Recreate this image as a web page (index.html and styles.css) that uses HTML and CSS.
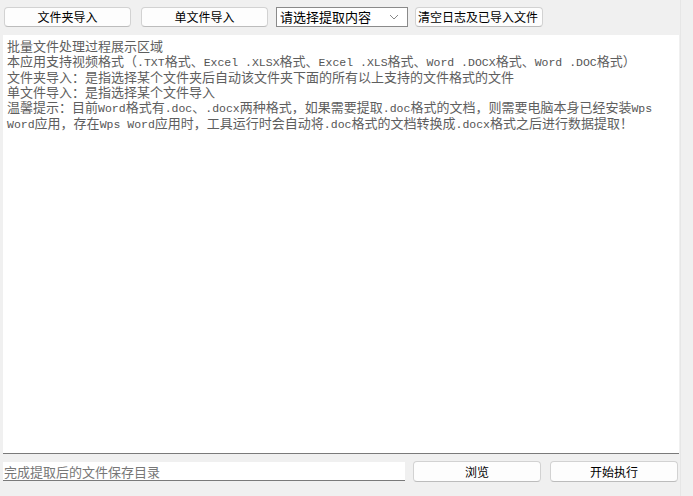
FILE: index.html
```html
<!DOCTYPE html>
<html>
	<head>
		<meta charset="utf-8">
		<title>批量文件处理</title>
		<link rel="stylesheet" href="styles.css">
	</head>
	<body>
		<div id="wrap">
			<div class="toolbar">
				<button type="button" class="btn btn-dir">文件夹导入</button>
				<button type="button" class="btn btn-file">单文件导入</button>
				<div class="select">
					<span>请选择提取内容</span>
					<svg class="arrow" width="10" height="6" viewBox="0 0 10 6"><path d="M1 1 L5 5 L9 1" fill="none" stroke="#888" stroke-width="1"/></svg>
				</div>
				<button type="button" class="btn btn-clear">清空日志及已导入文件</button>
			</div>
			<div class="log">
				<p>批量文件处理过程展示区域</p>
				<p>本应用支持视频格式（<span class="en">.TXT</span>格式、<span class="en">Excel .XLSX</span>格式、<span class="en">Excel .XLS</span>格式、<span class="en">Word .DOCX</span>格式、<span class="en">Word .DOC</span>格式）</p>
				<p>文件夹导入：是指选择某个文件夹后自动该文件夹下面的所有以上支持的文件格式的文件</p>
				<p>单文件导入：是指选择某个文件导入</p>
				<p>温馨提示：目前<span class="en">Word</span>格式有<span class="en">.doc</span>、<span class="en">.docx</span>两种格式，如果需要提取<span class="en">.doc</span>格式的文档，则需要电脑本身已经安装<span class="en">Wps</span></p>
				<p><span class="en">Word</span>应用，存在<span class="en">Wps Word</span>应用时，工具运行时会自动将<span class="en">.doc</span>格式的文档转换成<span class="en">.docx</span>格式之后进行数据提取！</p>
			</div>
			<div class="footer">
				<input type="text" class="path" placeholder="完成提取后的文件保存目录">
				<button type="button" class="btn btn-browse">浏览</button>
				<button type="button" class="btn btn-run">开始执行</button>
			</div>
		</div>
	</body>
</html>
```

FILE: styles.css
```css
body{
	margin: 0;
	background-color: #f0f0f0;
	font-family: "Noto Sans CJK SC", "Noto Sans", sans-serif;
	font-size: 13px;
	color: #000;
}
#wrap {
	width: 680px;
	height: 496px;
	border-right: 1px solid #e6e6e6;
}
.toolbar {
	display: flex;
	align-items: center;
	height: 20px;
	padding: 7px 0 0 4px;
}
.btn {
	height: 20px;
	padding: 0;
	background-color: #fdfdfd;
	border: 1px solid #d2d2d2;
	border-bottom-color: #bcbcbc;
	border-radius: 4px;
	font-family: "Noto Sans CJK SC", sans-serif;
	font-size: 12px;
	line-height: 18px;
	color: #000;
	white-space: nowrap;
	outline: none;
}
.btn-dir {
	width: 127px;
	margin-right: 10px;
}
.btn-file {
	width: 127px;
	margin-right: 8px;
}
.btn-clear {
	width: 128px;
	padding-left: 2px;
	text-align: left;
}
.select {
	width: 127px;
	height: 18px;
	margin-right: 7px;
	padding-left: 3px;
	border: 1px solid #8a8a8a;
	background-color: #fff;
	display: flex;
	align-items: center;
	justify-content: space-between;
	line-height: 18px;
}
.arrow {
	margin-right: 8px;
}
.log {
	margin: 8px 0 0 3px;
	width: 672px;
	height: 415px;
	padding: 3px 0 0 4px;
	background-color: #fff;
	border-bottom: 1px solid #7a7a7a;
	color: #5e5e5e;
	line-height: 15.2px;
}
.log p {
	margin: 0;
	white-space: nowrap;
}
.en {
	font-family: "Liberation Mono", monospace;
	font-size: 11.5px;
	line-height: 1;
	color: #555;
}
.footer {
	display: flex;
	align-items: center;
	margin-top: 7px;
	padding-left: 3px;
}
.path {
	width: 402px;
	height: 19px;
	margin: 0 8px 0 0;
	padding: 0 0 0 1px;
	box-sizing: border-box;
	border: none;
	border-bottom: 1px solid #7a7a7a;
	background-color: #fff;
	font-family: "Noto Sans CJK SC", sans-serif;
	font-size: 13px;
	outline: none;
}
.path::placeholder {
	color: #777;
}
.btn-browse {
	width: 128px;
	height: 21px;
	margin-right: 9px;
}
.btn-run {
	width: 128px;
	height: 21px;
}
```
